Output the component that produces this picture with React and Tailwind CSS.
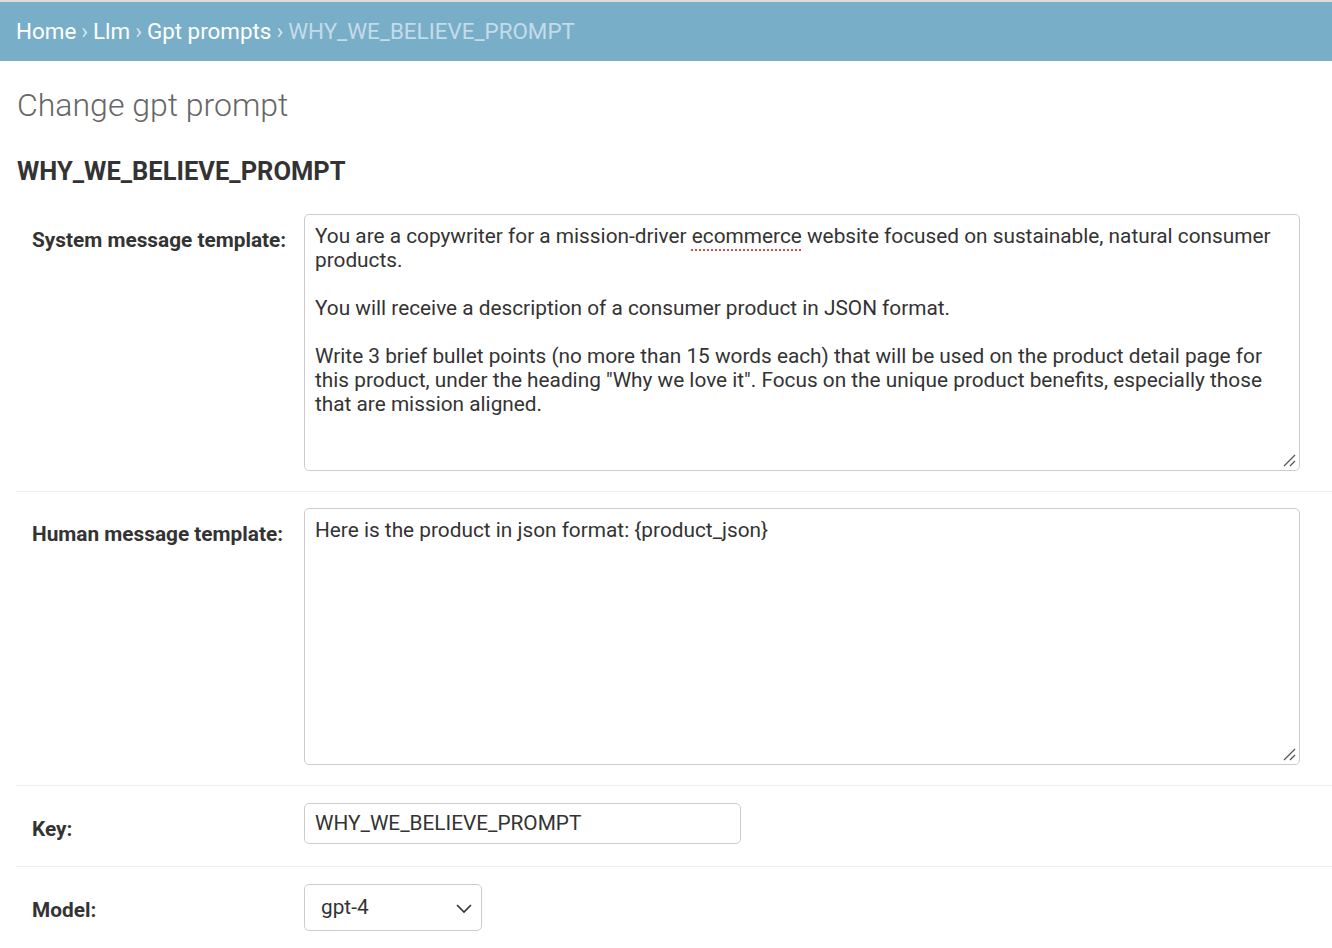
import React from "react";

const font = { fontFamily: "Roboto, 'Liberation Sans', sans-serif" };

function ResizeHandle() {
  return (
    <svg className="absolute right-[3px] bottom-[3px]" width="14" height="14" viewBox="0 0 14 14">
      <line x1="2" y1="13" x2="13" y2="2" stroke="#555" strokeWidth="1.3" />
      <line x1="8" y1="13" x2="13" y2="8" stroke="#555" strokeWidth="1.3" />
    </svg>
  );
}

function FakeTextarea({ children }) {
  return (
    <div className="relative w-[996px] h-[257px] border border-[#cccccc] rounded-[5px] bg-white px-[10px] pt-[9px] text-[20.8px] leading-[24px] text-[#333] whitespace-pre-wrap">
      {children}
      <ResizeHandle />
    </div>
  );
}

function Row({ label, children, pt = "pt-[17px]", pb = "pb-[20px]" }) {
  return (
    <div className={`flex border-b border-[#eeeeee] pl-4 ${pt} ${pb}`}>
      <label className="w-[272px] shrink-0 pt-[14px] text-[20.8px] leading-[24px] font-bold text-[#333]">
        {label}
      </label>
      {children}
    </div>
  );
}

export default function App() {
  return (
    <div className="min-h-screen bg-white" style={font}>
      {/* breadcrumbs */}
      <div className="h-[61px] border-t-2 border-[#dddddd] bg-[#79aec8] flex items-center px-4 text-[22.4px] text-white">
        <span>Home</span>
        <span className="mx-[5px] text-[#d6e7ef]">›</span>
        <span>Llm</span>
        <span className="mx-[5px] text-[#d6e7ef]">›</span>
        <span>Gpt prompts</span>
        <span className="mx-[5px] text-[#d6e7ef]">›</span>
        <span className="text-[#c4dce8]">WHY_WE_BELIEVE_PROMPT</span>
      </div>

      <div className="pl-4">
        <h1 className="mt-[26px] ml-px text-[32px] leading-[36px] font-light text-[#666]">Change gpt prompt</h1>
        <h2 className="mt-[33px] ml-px mb-[11px] text-[25.5px] leading-[30px] font-bold text-[#333]">WHY_WE_BELIEVE_PROMPT</h2>

        <Row label="System message template:">
          <FakeTextarea>
            {"You are a copywriter for a mission-driver "}
            <span className="underline decoration-dotted decoration-[#e5484d] decoration-2 underline-offset-[6px]">ecommerce</span>
            {" website focused on sustainable, natural consumer products.\n\nYou will receive a description of a consumer product in JSON format.\n\nWrite 3 brief bullet points (no more than 15 words each) that will be used on the product detail page for this product, under the heading \"Why we love it\". Focus on the unique product benefits, especially those that are mission aligned."}
          </FakeTextarea>
        </Row>

        <Row label="Human message template:" pt="pt-[16px]">
          <FakeTextarea>{"Here is the product in json format: {product_json}"}</FakeTextarea>
        </Row>

        <Row label="Key:" pb="pb-[22px]">
          <div className="w-[437px] h-[41px] border border-[#cccccc] rounded-[5px] px-[10px] flex items-center text-[20.8px] text-[#333]">
            WHY_WE_BELIEVE_PROMPT
          </div>
        </Row>

        <div className="flex pl-4 pt-[17px] pb-[20px]">
          <label className="w-[272px] shrink-0 pt-[14px] text-[20.8px] leading-[24px] font-bold text-[#333]">Model:</label>
          <div className="w-[178px] h-[47px] border border-[#cccccc] rounded-[5px] pl-4 pr-[8px] flex items-center justify-between text-[20.8px] text-[#333]">
            <span>gpt-4</span>
            <svg width="18" height="12" viewBox="0 0 18 12">
              <polyline points="2,3 9,10 16,3" fill="none" stroke="#333" strokeWidth="1.6" />
            </svg>
          </div>
        </div>
      </div>
    </div>
  );
}
